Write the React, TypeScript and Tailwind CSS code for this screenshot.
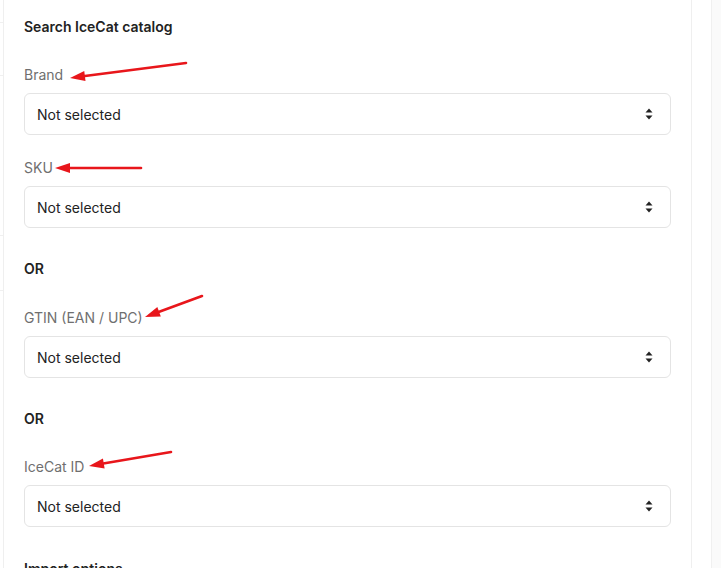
import { JSX } from "react";

const SelectChevrons = (): JSX.Element => (
  <svg width="8" height="12" viewBox="0 0 8 12" className="shrink-0">
    <path d="M4 0.5 L7.5 4.5 H0.5 Z" fill="#222" />
    <path d="M4 11.5 L7.5 7.5 H0.5 Z" fill="#222" />
  </svg>
);

const FakeSelect = (): JSX.Element => (
  <div className="flex h-[42px] items-center justify-between rounded-[6px] border border-[#e4e4e4] bg-white pl-3 pr-[17px]">
    <span className="text-[14px] text-[#222]">Not selected</span>
    <SelectChevrons />
  </div>
);

const Field = ({ label, top }: { label: string; top: string }): JSX.Element => (
  <div className={top}>
    <p className="mb-2 h-5 text-[14px] leading-5 text-[#6f6f6f]">{label}</p>
    <FakeSelect />
  </div>
);

type ArrowProps = { x1: number; y1: number; x2: number; y2: number };

// line from (x1,y1) to the tip at (x2,y2)
const Arrow = ({ x1, y1, x2, y2 }: ArrowProps): JSX.Element => {
  const dx = x2 - x1;
  const dy = y2 - y1;
  const len = Math.sqrt(dx * dx + dy * dy);
  const ux = dx / len;
  const uy = dy / len;
  const headLen = 15;
  const headW = 5;
  const bx = x2 - ux * headLen;
  const by = y2 - uy * headLen;
  const p1 = `${bx - uy * headW},${by + ux * headW}`;
  const p2 = `${bx + uy * headW},${by - ux * headW}`;
  return (
    <g>
      <line x1={x1} y1={y1} x2={bx + ux * 2} y2={by + uy * 2} stroke="#e8161b" strokeWidth="2.6" strokeLinecap="round" />
      <polygon points={`${x2},${y2} ${p1} ${p2}`} fill="#e8161b" />
    </g>
  );
};

const App = (): JSX.Element => {
  return (
    <div className="relative flex h-[568px] w-[721px] overflow-hidden bg-white font-['Inter','Liberation_Sans',sans-serif]">
      <div className="relative w-[3px] shrink-0">
        <div className="absolute left-0 top-[22px] h-px w-[3px] bg-[#f0f0f0]" />
        <div className="absolute left-0 top-[75px] h-px w-[3px] bg-[#f0f0f0]" />
        <div className="absolute left-0 top-[235px] h-px w-[3px] bg-[#f0f0f0]" />
        <div className="absolute left-0 top-[290px] h-px w-[3px] bg-[#f0f0f0]" />
      </div>
      <section className="w-[689px] shrink-0 border-x border-[#efefef] px-5 pt-[17px]">
        <h2 className="h-5 text-[14px] font-semibold leading-5 text-[#222]">Search IceCat catalog</h2>
        <Field label="Brand" top="mt-[28px]" />
        <Field label="SKU" top="mt-[23px]" />
        <p className="mt-[31px] h-5 text-[14px] font-semibold leading-5 text-[#222]">OR</p>
        <Field label="GTIN (EAN / UPC)" top="mt-[29px]" />
        <p className="mt-[31px] h-5 text-[14px] font-semibold leading-5 text-[#222]">OR</p>
        <Field label="IceCat ID" top="mt-[28px]" />
        <p className="mt-[32px] h-5 text-[14px] font-semibold leading-5 text-[#222]">Import options</p>
      </section>
      <div className="w-[20px] shrink-0 border-r border-[#f0f0f0]" />
      <div className="flex-1 bg-[#fafafa]" />
      <svg className="pointer-events-none absolute inset-0" width="721" height="568">
        <Arrow x1={186} y1={63} x2={70} y2={78} />
        <Arrow x1={141} y1={168} x2={55} y2={168} />
        <Arrow x1={202} y1={296} x2={145} y2={317} />
        <Arrow x1={171} y1={452} x2={89} y2={466} />
      </svg>
    </div>
  );
};

export default App;
